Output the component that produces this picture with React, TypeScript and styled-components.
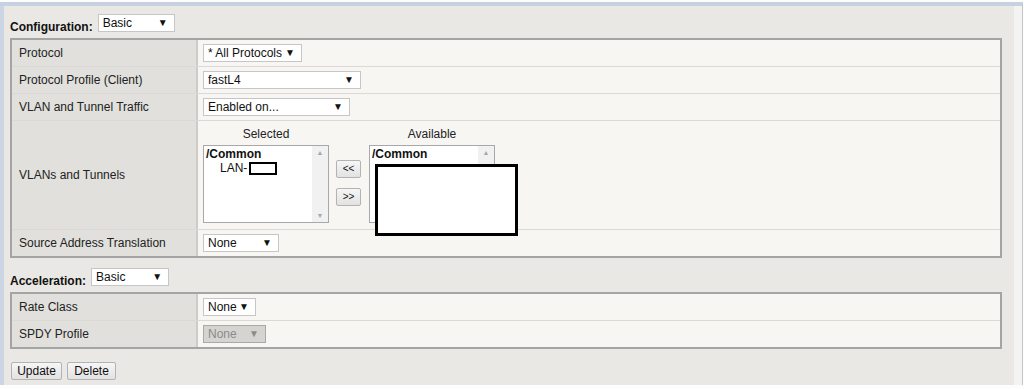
import React from "react";
import styled, { createGlobalStyle } from "styled-components";

const GlobalStyle = createGlobalStyle`
  html, body {
    margin: 0;
    padding: 0;
    background: #fdfdfd;
    font-family: "Liberation Sans", Arial, sans-serif;
    font-size: 12px;
    color: #222;
  }
`;

const Frame = styled.div`
  margin-top: 2px;
  width: 1022px;
  border-top: 4px solid #c7d1e0;
  display: flex;
  background: #f3f3f3;
  border-right: 1px solid #c4c4c4;
`;

const Panel = styled.div`
  width: 1014px;
  height: 379px;
  box-sizing: border-box;
  border-left: 4px solid #ccd5e3;
  background: #e9e8e4;
  padding: 8px 0 0 6px;
`;

const SectionHead = styled.div<{ $top?: number }>`
  display: flex;
  align-items: flex-start;
  gap: 5px;
  height: 20px;
  margin-top: ${(p) => p.$top ?? 0}px;
  margin-bottom: 4px;
`;

const HeadLabel = styled.span`
  margin-top: 6px;
  line-height: 14px;
  font-weight: bold;
  font-size: 12px;
  color: #111;
`;

const Dropdown = styled.div<{ $w: number; $disabled?: boolean }>`
  width: ${(p) => p.$w}px;
  height: 18px;
  box-sizing: border-box;
  display: inline-flex;
  align-items: center;
  justify-content: space-between;
  padding: 0 6px 0 4px;
  background: ${(p) => (p.$disabled ? "#d5d4d0" : "#ffffff")};
  border: 1px solid ${(p) => (p.$disabled ? "#a9a9a6" : "#c6c6c6")};
  color: ${(p) => (p.$disabled ? "#8b8b8b" : "#111")};
  font-size: 12px;
  line-height: 16px;
  white-space: nowrap;

  i {
    font-style: normal;
    font-size: 10px;
    color: ${(p) => (p.$disabled ? "#8b8b8b" : "#111")};
  }
`;

const Table = styled.div`
  width: 992px;
  box-sizing: border-box;
  border: 2px solid #a4a4a4;
  background: #f7f6f3;
`;

const Row = styled.div<{ $h?: number }>`
  display: grid;
  grid-template-columns: 186px 1fr;
  height: ${(p) => p.$h ?? 26}px;
  & + & {
    border-top: 1px solid #dad9d5;
  }
`;

const LabelCell = styled.div`
  background: #e1e0dc;
  border-right: 2px solid #cdccc8;
  display: flex;
  align-items: center;
  padding-left: 7px;
  color: #222;
`;

const ValueCell = styled.div`
  display: flex;
  align-items: center;
  padding-left: 5px;
`;

const Mover = styled.div`
  display: flex;
  align-items: flex-start;
  padding-top: 6px;
  align-self: flex-start;
`;

const ListColumn = styled.div`
  display: flex;
  flex-direction: column;
  align-items: center;
`;

const ListTitle = styled.div`
  line-height: 14px;
  height: 14px;
  margin-bottom: 4px;
  color: #222;
`;

const ListBox = styled.div`
  position: relative;
  width: 126px;
  height: 78px;
  box-sizing: border-box;
  border: 1px solid #a8a8a8;
  background: #fff;
  display: flex;
`;

const ListItems = styled.div`
  flex: 1;
  padding: 1px 2px;
  line-height: 14px;
  color: #111;
`;

const Group = styled.div`
  font-weight: bold;
`;

const Option = styled.div`
  padding-left: 14px;
  display: flex;
  align-items: center;
`;

const Scrollbar = styled.div`
  width: 16px;
  background: #f1f1f1;
  display: flex;
  flex-direction: column;
  justify-content: space-between;
  align-items: center;
  font-size: 7px;
  color: #a8a8a8;
  padding: 3px 0;
`;

const Redact = styled.span`
  display: inline-block;
  margin-left: 2px;
  width: 24px;
  height: 9px;
  border: 2px solid #000;
  background: #fff;
`;

const RedactOverlay = styled.div`
  position: absolute;
  left: 5px;
  top: 18px;
  width: 137px;
  height: 66px;
  border: 3px solid #000;
  background: #fff;
`;

const MoveButtons = styled.div`
  display: flex;
  flex-direction: column;
  gap: 10px;
  margin: 33px 8px 0 7px;
`;

const Btn = styled.button<{ $w: number }>`
  width: ${(p) => p.$w}px;
  height: 18px;
  padding: 0;
  font-family: "Liberation Sans", Arial, sans-serif;
  font-size: 12px;
  color: #111;
  background: linear-gradient(#f6f6f6, #e2e2e2);
  border: 1px solid #b3b3b3;
  border-radius: 2px;
  line-height: 16px;
`;

const SmallBtn = styled(Btn)`
  font-size: 10px;
`;

const Actions = styled.div`
  display: flex;
  gap: 5px;
  margin: 13px 0 0 1px;
`;

const Arrow = () => <i>▼</i>;

export default function App() {
  return (
    <>
      <GlobalStyle />
      <Frame>
        <Panel>
          <SectionHead>
            <HeadLabel>Configuration:</HeadLabel>
            <Dropdown $w={77}>
              Basic <Arrow />
            </Dropdown>
          </SectionHead>
          <Table>
            <Row>
              <LabelCell>Protocol</LabelCell>
              <ValueCell>
                <Dropdown $w={99}>
                  * All Protocols <Arrow />
                </Dropdown>
              </ValueCell>
            </Row>
            <Row>
              <LabelCell>Protocol Profile (Client)</LabelCell>
              <ValueCell>
                <Dropdown $w={158}>
                  fastL4 <Arrow />
                </Dropdown>
              </ValueCell>
            </Row>
            <Row>
              <LabelCell>VLAN and Tunnel Traffic</LabelCell>
              <ValueCell>
                <Dropdown $w={147}>
                  Enabled on... <Arrow />
                </Dropdown>
              </ValueCell>
            </Row>
            <Row $h={108}>
              <LabelCell>VLANs and Tunnels</LabelCell>
              <ValueCell>
                <Mover>
                  <ListColumn>
                    <ListTitle>Selected</ListTitle>
                    <ListBox>
                      <ListItems>
                        <Group>/Common</Group>
                        <Option>
                          LAN-<Redact />
                        </Option>
                      </ListItems>
                      <Scrollbar>
                        <span>▲</span>
                        <span>▼</span>
                      </Scrollbar>
                    </ListBox>
                  </ListColumn>
                  <MoveButtons>
                    <SmallBtn $w={25}>&lt;&lt;</SmallBtn>
                    <SmallBtn $w={25}>&gt;&gt;</SmallBtn>
                  </MoveButtons>
                  <ListColumn>
                    <ListTitle>Available</ListTitle>
                    <ListBox>
                      <ListItems>
                        <Group>/Common</Group>
                      </ListItems>
                      <Scrollbar>
                        <span>▲</span>
                        <span />
                      </Scrollbar>
                      <RedactOverlay />
                    </ListBox>
                  </ListColumn>
                </Mover>
              </ValueCell>
            </Row>
            <Row>
              <LabelCell>Source Address Translation</LabelCell>
              <ValueCell>
                <Dropdown $w={76}>
                  None <Arrow />
                </Dropdown>
              </ValueCell>
            </Row>
          </Table>

          <SectionHead $top={10}>
            <HeadLabel>Acceleration:</HeadLabel>
            <Dropdown $w={78}>
              Basic <Arrow />
            </Dropdown>
          </SectionHead>
          <Table>
            <Row>
              <LabelCell>Rate Class</LabelCell>
              <ValueCell>
                <Dropdown $w={53}>
                  None <Arrow />
                </Dropdown>
              </ValueCell>
            </Row>
            <Row>
              <LabelCell>SPDY Profile</LabelCell>
              <ValueCell>
                <Dropdown $w={63} $disabled>
                  None <Arrow />
                </Dropdown>
              </ValueCell>
            </Row>
          </Table>

          <Actions>
            <Btn $w={51}>Update</Btn>
            <Btn $w={49}>Delete</Btn>
          </Actions>
        </Panel>
      </Frame>
    </>
  );
}
